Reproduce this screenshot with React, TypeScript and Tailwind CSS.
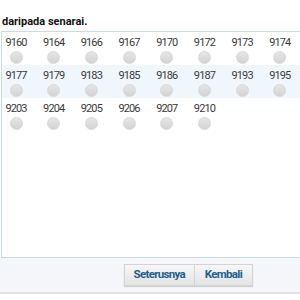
import React from 'react';

const rows = [
  ['9160', '9164', '9166', '9167', '9170', '9172', '9173', '9174'],
  ['9177', '9179', '9183', '9185', '9186', '9187', '9193', '9195'],
  ['9203', '9204', '9205', '9206', '9207', '9210'],
];

function Radio() {
  return (
    <span className="block w-[13px] h-[13px] rounded-full bg-gradient-to-b from-[#e6e6e6] to-[#d3d3d3] border border-[#d8d8d8]" />
  );
}

export default function App() {
  return (
    <div className="w-[300px] h-[300px] bg-white overflow-hidden font-['Roboto',sans-serif]">
      <div className="h-[31px] flex items-end pb-[2px] pl-[2px]">
        <p className="text-[11px] font-bold text-[#111] leading-[14px]">daripada senarai.</p>
      </div>
      <div className="h-[227px] ml-[1px] border-t border-l border-b border-[#c8dbe6]">
        {rows.map((row, i) => (
          <div key={i} className={`grid grid-cols-[repeat(8,37.7px)] h-[33px] ${i % 2 === 1 ? 'bg-[#f0f7fc]' : 'bg-white'}`}>
            {row.map((n) => (
              <div key={n} className="w-[28px] flex flex-col items-center pt-[4px] gap-[1px]">
                <span className="text-[11px] leading-[14px] tracking-[-0.9px] text-[#3a3a3a]">{n}</span>
                <Radio />
              </div>
            ))}
          </div>
        ))}
      </div>
      <div className="h-[36px] bg-[#f5f6fa] flex items-center justify-end pr-[47px] border-b-2 border-[#e2e2e6]">
        <div className="flex shadow-[0_1px_1px_rgba(0,0,0,0.15)]">
          <button className="h-[22px] px-[9px] text-[11.5px] tracking-[-0.7px] font-bold text-[#1f5f8e] bg-gradient-to-b from-[#f7f7f7] to-[#e4e4e4] border border-[#d4d4d4]">Seterusnya</button>
          <button className="h-[22px] px-[10px] text-[11.5px] tracking-[-0.7px] font-bold text-[#1f5f8e] bg-gradient-to-b from-[#f7f7f7] to-[#e4e4e4] border border-l-0 border-[#d4d4d4]">Kembali</button>
        </div>
      </div>
    </div>
  );
}
